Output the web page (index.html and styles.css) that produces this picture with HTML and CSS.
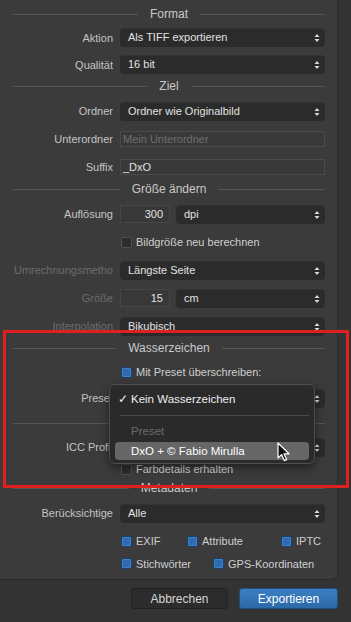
FILE: index.html
```html
<!doctype html>
<html lang="de">
<head>
	<meta charset="utf-8">
	<title>Export</title>
	<link rel="stylesheet" href="styles.css">
</head>
<body>
	<div class="panel">
		<div class="hdr first"><i></i><span>Format</span><i></i></div>
		<div class="row h27"><label>Aktion</label><div class="popup">Als TIFF exportieren<svg class="arr" width="6" height="10" viewBox="0 0 6 10"><path d="M3 1L5.5 4H0.5z M3 9L5.5 6H0.5z" fill="#d8d8d8"/></svg></div></div>
		<div class="row h27"><label>Qualität</label><div class="popup">16 bit<svg class="arr" width="6" height="10" viewBox="0 0 6 10"><path d="M3 1L5.5 4H0.5z M3 9L5.5 6H0.5z" fill="#d8d8d8"/></svg></div></div>

		<div class="hdr"><i></i><span>Ziel</span><i></i></div>
		<div class="row"><label>Ordner</label><div class="popup">Ordner wie Originalbild<svg class="arr" width="6" height="10" viewBox="0 0 6 10"><path d="M3 1L5.5 4H0.5z M3 9L5.5 6H0.5z" fill="#d8d8d8"/></svg></div></div>
		<div class="row"><label>Unterordner</label><div class="field ph">Mein Unterordner</div></div>
		<div class="row"><label>Suffix</label><div class="field">_DxO</div></div>

		<div class="hdr"><i></i><span>Größe ändern</span><i></i></div>
		<div class="row"><label>Auflösung</label>
			<div class="pair"><div class="num">300</div><div class="popup">dpi<svg class="arr" width="6" height="10" viewBox="0 0 6 10"><path d="M3 1L5.5 4H0.5z M3 9L5.5 6H0.5z" fill="#d8d8d8"/></svg></div></div>
		</div>
		<div class="row"><label></label><div class="checks"><span class="cb"><b class="box"></b>Bildgröße neu berechnen</span></div></div>
		<div class="row dim"><label>Umrechnungsmetho</label><div class="popup">Längste Seite<svg class="arr" width="6" height="10" viewBox="0 0 6 10"><path d="M3 1L5.5 4H0.5z M3 9L5.5 6H0.5z" fill="#d8d8d8"/></svg></div></div>
		<div class="row dim"><label>Größe</label>
			<div class="pair"><div class="num">15</div><div class="popup">cm<svg class="arr" width="6" height="10" viewBox="0 0 6 10"><path d="M3 1L5.5 4H0.5z M3 9L5.5 6H0.5z" fill="#d8d8d8"/></svg></div></div>
		</div>
		<div class="row dim"><label>Interpolation</label><div class="popup">Bikubisch<svg class="arr" width="6" height="10" viewBox="0 0 6 10"><path d="M3 1L5.5 4H0.5z M3 9L5.5 6H0.5z" fill="#d8d8d8"/></svg></div></div>

		<div class="hdr"><i></i><span>Wasserzeichen</span><i></i></div>
		<div class="row h26"><label></label><div class="checks"><span class="cb"><b class="box on"></b>Mit Preset überschreiben:</span></div></div>
		<!-- popup value is hidden by the open menu -->
		<div class="row h26"><label>Preset</label><div class="popup"><svg class="arr" width="6" height="10" viewBox="0 0 6 10"><path d="M3 1L5.5 4H0.5z M3 9L5.5 6H0.5z" fill="#d8d8d8"/></svg></div></div>

		<div class="hdr mt4"><i></i><span></span><i></i></div>
		<div class="row h26"><label>ICC Profil</label><div class="popup"><svg class="arr" width="6" height="10" viewBox="0 0 6 10"><path d="M3 1L5.5 4H0.5z M3 9L5.5 6H0.5z" fill="#d8d8d8"/></svg></div></div>
		<div class="row h18"><label></label><div class="checks"><span class="cb"><b class="box"></b>Farbdetails erhalten</span></div></div>

		<div class="hdr mt2"><i></i><span>Metadaten</span><i></i></div>
		<div class="row"><label>Berücksichtige</label><div class="popup">Alle<svg class="arr" width="6" height="10" viewBox="0 0 6 10"><path d="M3 1L5.5 4H0.5z M3 9L5.5 6H0.5z" fill="#d8d8d8"/></svg></div></div>
		<div class="row"><label></label>
			<div class="checks">
				<span class="cb w66"><b class="box on"></b>EXIF</span>
				<span class="cb w94"><b class="box on"></b>Attribute</span>
				<span class="cb"><b class="box on"></b>IPTC</span>
			</div>
		</div>
		<div class="row h17"><label></label>
			<div class="checks">
				<span class="cb w92"><b class="box on"></b>Stichwörter</span>
				<span class="cb"><b class="box on"></b>GPS-Koordinaten</span>
			</div>
		</div>
	</div>

	<div class="buttons">
		<button class="btn">Abbrechen</button>
		<button class="btn primary">Exportieren</button>
	</div>

	<div class="menu">
		<div class="item"><span class="tick">✓</span>Kein Wasserzeichen</div>
		<div class="sep"></div>
		<div class="item grey">Preset</div>
		<div class="item sel">DxO + © Fabio Mirulla</div>
	</div>

	<svg class="cursor" width="14" height="21" viewBox="0 0 14 21">
		<path d="M1 1 L1 16 L4.6 12.6 L7.2 18.6 L9.6 17.6 L7 11.8 L12 11.8 Z" fill="#111" stroke="#fff" stroke-width="1.2" stroke-linejoin="round"/>
	</svg>

	<div class="mark"></div>
</body>
</html>
```

FILE: styles.css
```css
*{ margin: 0; padding: 0; box-sizing: border-box; }
body{
	background: #333333; width: 351px; height: 622px; overflow: hidden;
	font-family: "Liberation Sans", Arial, sans-serif; font-size: 11px;
	color: #cfcfcf; position: relative; }

.panel{
	width: 338px; margin-top: -4px; padding: 9px 0 7px 0;
	background: #3b3b3b; border: 1px solid #2b2b2b; border-left: none;
	border-radius: 0 6px 6px 0; }

.hdr{
	display: flex; align-items: center; height: 16px;
	margin: 0 12px 3px 13px; font-size: 12px; color: #c9c9c9; }
.hdr i{ flex: 1; height: 1px; background: #555555; }
.hdr span{ padding: 0 12px; }
.hdr.first{ margin-bottom: 2px; }
.hdr.mt4{ margin-top: 4px; }
.hdr.mt2{ margin-top: 2px; }

.row{
	display: grid; grid-template-columns: 113px 205px; column-gap: 7px;
	align-items: center; height: 28px; }
.row.h27{ height: 27px; }
.row.h26{ height: 26px; }
.row.h18{ height: 18px; }
.row.h17{ height: 17px; }
.row label{ text-align: right; color: #c4c4c4; white-space: nowrap; overflow: hidden; }
.row.dim label{ color: #6c6c6c; }

.popup{
	position: relative; height: 19px;
	padding-left: 8px; color: #e2e2e2;
	background: #2b2b2b; border-radius: 4px;
	border-top: 1px solid #323232; line-height: 17px; }
.arr{ position: absolute; right: 5px; top: 4px; }

.field{
	height: 16px; line-height: 14px; padding-left: 2px;
	background: #393939; border: 1px solid #4a4a4a; color: #e2e2e2; }
.field.ph{ color: #6e6e6e; }

.pair{ display: flex; gap: 6px; }
.pair .popup{ flex: 1; }
.num{
	width: 50px; height: 18px; line-height: 16px; text-align: right; padding-right: 6px;
	background: #383838; border: 1px solid #464646; color: #e2e2e2; }

.checks{ display: flex; align-items: center; padding-left: 1px; }
.cb{ display: flex; align-items: center; gap: 4px; color: #cfcfcf; white-space: nowrap; }
.w66{ width: 66px; }
.w94{ width: 94px; }
.w92{ width: 92px; }
.box{
	display: block; width: 11px; height: 11px; border-radius: 2px;
	background: #2d2d2d; border: 1px solid #505050; }
.box.on{ background: #2e6bb0; border: 1px solid #1d3f66; box-shadow: inset 0 0 0 1px #3f80c8; }

.buttons{
	display: flex; justify-content: flex-end; gap: 11px;
	margin-top: 8px; padding-right: 13px; }
.btn{
	width: 97px; height: 21px; font-family: inherit; font-size: 12px;
	color: #d6d6d6; background: #2c2c2c; border: 1px solid #222222; border-radius: 3px; }
.btn.primary{
	width: 99px; color: #ffffff; border-color: #1f4f80;
	background: linear-gradient(#3a7fc4, #2c69a8); }

.menu{
	position: absolute; left: 109px; top: 384px; width: 206px; height: 80px;
	padding: 5px 5px; background: #2a2a2a; border: 1px solid #4e4e4e; border-radius: 6px;
	box-shadow: 0 3px 10px rgba(0,0,0,0.5); font-size: 11.5px; color: #ececec; }
.item{ position: relative; height: 18px; line-height: 18px; padding-left: 16px; border-radius: 4px; }
.tick{ position: absolute; left: 3px; }
.sep{ height: 1px; background: #4a4a4a; margin: 7px 0 6px 5px; }
.item.grey{ color: #6a6a6a; }
.item.sel{ margin-top: 2px; background: #666666; color: #ffffff; }

.cursor{ position: absolute; left: 277px; top: 442px; }

.mark{
	position: absolute; left: 3px; top: 330px; width: 346px; height: 158px;
	border: 3px solid #e01f1f; }
```
